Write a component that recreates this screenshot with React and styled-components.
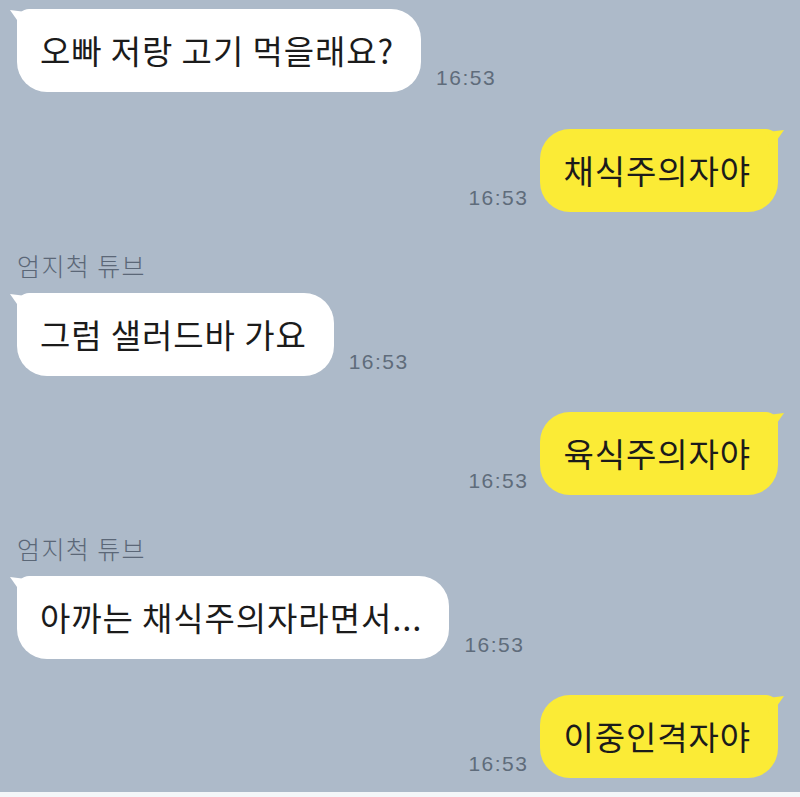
import styled, { createGlobalStyle } from 'styled-components';

const GlobalStyle = createGlobalStyle`
  html, body {
    margin: 0;
    padding: 0;
    background: #f4f7f9;
  }
  * { box-sizing: border-box; }
`

const Chat = styled.div`
  height: 792px;
  background: #adbac9;
  padding: 9px 22px 0 17px;
  display: flex;
  flex-direction: column;
  font-family: "Noto Sans CJK KR", "Noto Sans", sans-serif;
  overflow: hidden;
`

const Row = styled.div`
  display: flex;
  align-items: flex-end;
  justify-content: ${p => (p.$mine ? 'flex-end' : 'flex-start')};
  gap: ${p => (p.$mine ? '12px' : '15px')};
  margin-top: ${p => p.$top || 0}px;
`

const Name = styled.div`
  margin-top: ${p => p.$top || 0}px;
  margin-bottom: 13px;
  font-size: 25px;
  line-height: 30px;
  font-weight: 300;
  color: #5b6777;
  letter-spacing: 1.4px;
`

const Bubble = styled.div`
  position: relative;
  height: 83px;
  display: flex;
  align-items: center;
  padding: 0 27px 2px 23px;
  font-size: 33px;
  font-weight: 400;
  color: #1b1b1b;
  letter-spacing: 0.9px;
  background: ${p => (p.$mine ? '#fbeb36' : '#ffffff')};
  border-radius: ${p => (p.$mine ? '30px 12px 30px 30px' : '12px 30px 30px 30px')};
  white-space: nowrap;

  &::before {
    content: '';
    position: absolute;
    top: 1px;
    ${p => (p.$mine ? 'right: -6px;' : 'left: -7px;')}
    width: 20px;
    height: 20px;
    background: inherit;
    clip-path: ${p =>
      p.$mine
        ? 'polygon(100% 0, 0 12%, 30% 100%)'
        : 'polygon(0 0, 100% 12%, 70% 100%)'};
  }
`

const Time = styled.span`
  font-size: 21px;
  line-height: 20px;
  letter-spacing: 1.5px;
  color: #5f6c7b;
  margin-bottom: 4px;
  font-family: "Liberation Sans", "Noto Sans", sans-serif;
`

const messages = [
  { text: '오빠 저랑 고기 먹을래요?', mine: false, top: 0 },
  { text: '채식주의자야', mine: true, top: 37 },
  { name: '엄지척 튜브', text: '그럼 샐러드바 가요', mine: false, top: 38 },
  { text: '육식주의자야', mine: true, top: 36 },
  { name: '엄지척 튜브', text: '아까는 채식주의자라면서...', mine: false, top: 38 },
  { text: '이중인격자야', mine: true, top: 36 },
]

const Message = ({ msg }) => (
  <>
    {msg.name && <Name $top={msg.top}>{msg.name}</Name>}
    <Row $mine={msg.mine} $top={msg.name ? 0 : msg.top}>
      {msg.mine && <Time>16:53</Time>}
      <Bubble $mine={msg.mine}>{msg.text}</Bubble>
      {!msg.mine && <Time>16:53</Time>}
    </Row>
  </>
)

const App = () => {
  return (
    <>
      <GlobalStyle />
      <Chat>
        {messages.map((m, i) => (
          <Message key={i} msg={m} />
        ))}
      </Chat>
    </>
  )
}

export default App;
